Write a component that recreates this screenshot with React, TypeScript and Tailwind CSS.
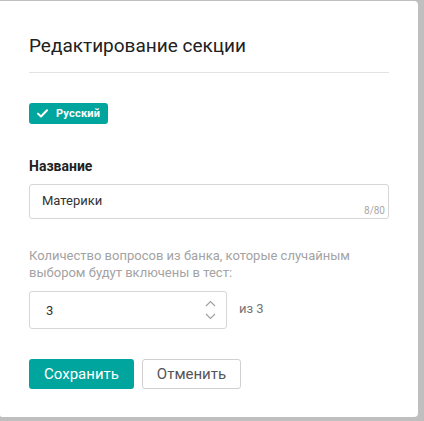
import React, { useState } from "react";

const font = { fontFamily: "Roboto, 'Noto Sans', sans-serif" };

const CheckIcon = () => (
  <svg width="11" height="9" viewBox="0 0 11 9" fill="none">
    <path d="M1 4.6 L4 7.5 L10 1.2" stroke="white" strokeWidth="2" strokeLinecap="round" strokeLinejoin="round" />
  </svg>
);

const Spinner = () => (
  <div className="flex flex-col items-center gap-[6px] pr-[10px]">
    <svg width="11" height="7" viewBox="0 0 11 7" fill="none">
      <path d="M1 6 L5.5 1.5 L10 6" stroke="#9e9e9e" strokeWidth="1.1" />
    </svg>
    <svg width="11" height="7" viewBox="0 0 11 7" fill="none">
      <path d="M1 1 L5.5 5.5 L10 1" stroke="#9e9e9e" strokeWidth="1.1" />
    </svg>
  </div>
);

export default function App() {
  const [name, setName] = useState("Материки");
  const [count, setCount] = useState("3");

  return (
    <div className="w-[424px] h-[421px] bg-[#bfbfbf] pt-px overflow-hidden" style={font}>
      <div className="w-[418px] h-[416px] bg-white rounded-r-[4px] rounded-bl-[2px] px-[29px] pt-[32px]">
        {/* заголовок */}
        <h2 className="text-[19px] leading-[26px] text-[#212121] font-normal">Редактирование секции</h2>
        <div className="mt-[13px] h-px bg-[#e3e3e3]" />

        {/* язык */}
        <div className="mt-[30px] inline-flex items-center gap-[8px] h-[21px] px-[8px] rounded-[3px] bg-[#00a59d]">
          <CheckIcon />
          <span className="text-[11px] font-bold text-white leading-none tracking-[0.2px]">Русский</span>
        </div>

        <div className="mt-[31px] text-[14px] font-bold text-[#212121] leading-[20px]">Название</div>

        <div className="relative mt-[8px] h-[35px] border border-[#d6d6d6] rounded-[3px]">
          <input
            value={name}
            onChange={(e) => setName(e.target.value)}
            className="w-full h-full pl-[12px] pb-[2px] text-[13px] text-[#333] outline-none bg-transparent"
          />
          <span className="absolute right-[3px] bottom-[2px] text-[10px] leading-none text-[#a8a8a8]">
            {name.length}/80
          </span>
        </div>

        <p className="mt-[28px] text-[13px] leading-[17px] text-[#a3a3a3]">
          Количество вопросов из банка, которые случайным выбором будут включены в тест:
        </p>

        <div className="mt-[10px] flex items-center gap-[12px]">
          <div className="w-[198px] h-[38px] border border-[#d6d6d6] rounded-[3px] flex items-center">
            <input
              value={count}
              onChange={(e) => setCount(e.target.value)}
              className="flex-1 min-w-0 h-full pl-[16px] text-[13px] text-[#333] outline-none bg-transparent"
            />
            <Spinner />
          </div>
          <span className="text-[13px] text-[#757575] pb-[2px]">из 3</span>
        </div>

        {/* кнопки */}
        <div className="mt-[30px] flex gap-[8px]">
          <button className="h-[30px] w-[105px] rounded-[3px] bg-[#00a59d] text-white text-[15px]">
            Сохранить
          </button>
          <button className="h-[30px] w-[99px] rounded-[3px] border border-[#d0d0d0] bg-white text-[#555] text-[15px]">
            Отменить
          </button>
        </div>
      </div>
    </div>
  );
}
